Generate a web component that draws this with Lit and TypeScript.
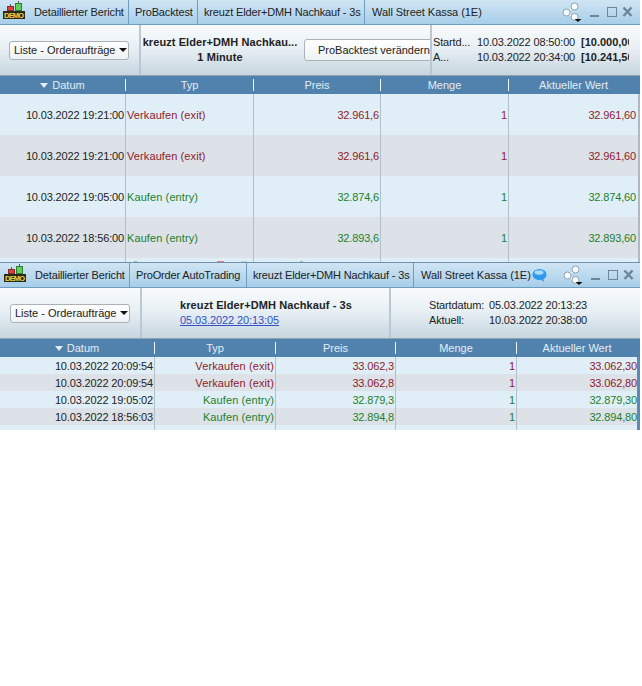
import { LitElement, html, css, svg } from "lit";
import { customElement, property } from "lit/decorators.js";

const RED = "sell";
const GREEN = "buy";

const demoLogo = html`<svg class="logo" width="24" height="20" viewBox="0 0 24 20">
  <path d="M7.500 3v3M15.500 0v3" stroke="#556" fill="none"/>
  <rect x="4.500" y="5.500" width="6" height="4" fill="#e0403a" stroke="#8a2a2a"/>
  <rect x="12.500" y="2.500" width="6" height="7" fill="#5fd05a" stroke="#2e7d32"/>
  <rect x="0" y="10" width="22" height="8" fill="#2a2a1c"/>
  <text x="11" y="17" text-anchor="middle" font-family="Liberation Sans, sans-serif" font-size="7.500" font-weight="700" fill="#f2d23c" textLength="20">DEMO</text>
</svg>`;

const shareIcon = svg`<svg width="20" height="20" viewBox="0 0 20 20">
  <path d="M4.500 10.500 L12.500 4.500 M4.500 10.500 L12.500 15.500" stroke="#f4f8fb" stroke-width="1.500" fill="none"/>
  <circle cx="4.500" cy="10.500" r="3.500" fill="#fbfdfe" stroke="#8aa1b3"/>
  <circle cx="12.500" cy="4.500" r="3.500" fill="#fbfdfe" stroke="#8aa1b3"/>
  <circle cx="12.500" cy="15" r="3.500" fill="#fbfdfe" stroke="#8aa1b3"/>
  <path d="M12.500 17h7l-3.500 3z" fill="#111"/>
</svg>`;

const winIcons = html`<svg width="44" height="12" viewBox="0 0 44 12">
  <path d="M0 10h9" stroke="#6d8597" stroke-width="2"/>
  <rect x="17.500" y="1.500" width="9" height="9" fill="none" stroke="#6d8597"/>
  <path d="M33.500 1.500l8 8.500M41.500 1.500l-8 8.500" stroke="#6d8597" stroke-width="2.400" fill="none"/>
</svg>`;

const bubble = html`<svg class="bubble" width="15" height="13" viewBox="0 0 15 13">
  <ellipse cx="7.500" cy="5.500" rx="7" ry="5.500" fill="#2f9be8"/>
  <ellipse cx="7" cy="3.500" rx="4.500" ry="2.200" fill="#a8dcfa"/>
  <path d="M8 10l4 3-1-4z" fill="#2f9be8"/>
</svg>`;

interface Row {
  datum: string;
  typ: string;
  preis: string;
  menge: string;
  wert: string;
  kind: string;
}

// bits of the chart behind the window that show through at its lower edge
const peeks = [
  { x: 134, w: 3, c: "#8fc09a" },
  { x: 217, w: 7, c: "#e08088" },
  { x: 241, w: 6, c: "#c4ced0" },
  { x: 300, w: 3, c: "#8fc09a" },
];

@customElement("trade-window")
class TradeWindow extends LitElement {
  @property({ reflect: true }) variant = "";
  @property({ attribute: false }) tabs: string[] = [];
  @property({ attribute: false }) rows: Row[] = [];

  static styles = css`
    :host {
      display: block;
      font-family: "Liberation Sans", Arial, sans-serif;
      font-size: 11px;
      color: #222;
      overflow: hidden;
      box-sizing: border-box;
      width: 640px;
    }
    :host([variant="backtest"]) {
      --cols: 126px 128px 127px 128px 129px;
      --tabs: 129px 69px 167px 1fr;
      --tool: 141px 291px 1fr;
      --row-h: 41px;
      --tail: 4px;
      --tab-pad: 3px;
      --ctl-pad: 6px;
      --last-pad: 2px;
      --select-pad: 9px;
      --scroll: #aeb9c3;
      --scroll-w: 2px;
      height: 262px;
    }
    :host([variant="live"]) {
      --cols: 155px 121px 120px 121px 120px;
      --tabs: 130px 117px 167px 1fr;
      --tool: 142px 249px 1fr;
      --row-h: 17px;
      --tail: 5px;
      --tab-pad: 4px;
      --ctl-pad: 5px;
      --last-pad: 0px;
      --select-pad: 10px;
      --scroll: #5b8ab4;
      --scroll-w: 3px;
      height: 168px;
      border-top: 1px solid #6e8fb0;
    }
    .tabs {
      display: grid;
      grid-template-columns: var(--tabs);
      height: 24px;
      background: linear-gradient(#d0e5f4, #a7cee9);
      border-bottom: 1px solid #6e9dc0;
      align-items: stretch;
    }
    .tab {
      display: flex;
      align-items: center;
      padding-left: 6px;
      border-right: 1px solid #6e9dc0;
      white-space: nowrap;
      overflow: hidden;
      gap: 1px;
      letter-spacing: -0.15px;
    }
    .tab.first {
      padding-left: var(--tab-pad);
      gap: 7px;
    }
    .tab.last {
      border-right: 0;
      padding-left: 7px;
      letter-spacing: -0.05px;
    }
    .logo {
      flex: none;
      margin-top: -2px;
    }
    .controls {
      margin-left: auto;
      padding-right: var(--ctl-pad);
      display: flex;
      align-items: center;
      gap: 8px;
    }
    .tool {
      display: grid;
      grid-template-columns: var(--tool);
      height: 50px;
      background: linear-gradient(#f8fbfd, #e8f0f5 45%, #c7d6df);
      border-bottom: 1px solid #8fa3b1;
    }
    .pane {
      border-right: 2px solid #b9c8d2;
      display: flex;
      align-items: center;
      overflow: hidden;
      white-space: nowrap;
    }
    .pane.end {
      border-right: 0;
    }
    .pane.select-pane {
      padding-left: var(--select-pad);
    }
    .select {
      box-sizing: border-box;
      width: 120px;
      height: 19px;
      display: flex;
      align-items: center;
      padding-left: 4px;
      gap: 3px;
      border: 1px solid #aab2b8;
      border-radius: 3px;
      background: linear-gradient(#ffffff, #eef2f4);
    }
    .caret {
      width: 0;
      height: 0;
      border: 4px solid transparent;
      border-top: 4px solid #111;
      border-bottom: 0;
    }
    .stack {
      display: flex;
      flex-direction: column;
      align-items: center;
      line-height: 15px;
      font-weight: 700;
      letter-spacing: 0.08px;
      width: 156px;
      margin-left: 1px;
      flex: none;
    }
    .bt-button {
      box-sizing: border-box;
      flex: none;
      width: 140px;
      height: 22px;
      margin-left: 6px;
      padding-left: 13px;
      line-height: 20px;
      border: 1px solid #aab2b8;
      border-radius: 3px;
      background: linear-gradient(#ffffff, #eef2f4);
    }
    .live-name {
      padding-left: 38px;
      line-height: 15px;
    }
    .live-name b {
      display: block;
      letter-spacing: 0.1px;
    }
    .live-name a {
      color: #3550c4;
      text-decoration: underline;
      letter-spacing: -0.1px;
    }
    .info {
      display: grid;
      line-height: 15px;
      letter-spacing: -0.15px;
    }
    .info.bt {
      grid-template-columns: 44px 104px 100px;
      padding-left: 1px;
      width: 196px;
      overflow: hidden;
    }
    .info b {
      letter-spacing: 0;
    }
    .info.lv {
      grid-template-columns: 60px 110px;
      padding-left: 38px;
    }
    .grid {
      display: grid;
      grid-template-columns: var(--cols);
    }
    .head {
      height: 18px;
      background: #5182ae;
      color: #e4edf4;
      align-items: center;
    }
    .head > div {
      text-align: center;
      border-right: 1px solid #f2f6f9;
      height: 12px;
      line-height: 12px;
      box-sizing: border-box;
    }
    .head > div:last-child {
      border-right: 0;
    }
    .sort {
      display: inline-block;
      width: 0;
      height: 0;
      margin-right: 4px;
      vertical-align: 1px;
      border: 4px solid transparent;
      border-top: 5px solid #e4edf4;
      border-bottom: 0;
    }
    .body {
      border-right: var(--scroll-w) solid var(--scroll);
    }
    .row > div {
      height: var(--row-h);
      line-height: var(--row-h);
      padding: 1px 1px 0 1px;
      text-align: right;
      border-right: 1px solid #b3c0ca;
      box-sizing: border-box;
      white-space: nowrap;
      letter-spacing: -0.15px;
    }
    .row > div.typ {
      letter-spacing: 0.1px;
    }
    .row > div:last-child {
      border-right: 0;
      padding-right: var(--last-pad);
    }
    .row.even > div {
      background: #e0eff7;
    }
    .row.odd > div {
      background: #dce2e8;
    }
    .sell {
      color: #8e1b2a;
    }
    .buy {
      color: #1d7f2c;
    }
    :host([variant="backtest"]) .row .typ {
      text-align: left;
    }
    .tail {
      position: relative;
    }
    .tail > div {
      height: var(--tail);
      background: #e0eff7;
      border-right: 1px solid #b3c0ca;
      box-sizing: border-box;
    }
    .tail > div:last-of-type {
      border-right: 0;
    }
    .peek {
      position: absolute;
      bottom: 0;
      height: 1px;
    }
  `;

  _middle() {
    if (this.variant === "live") {
      return html`<div class="live-name"><b>kreuzt Elder+DMH Nachkauf - 3s</b><a>05.03.2022 20:13:05</a></div>`;
    }
    return html`<div class="stack"><span>kreuzt Elder+DMH Nachkau...</span><span>1 Minute</span></div>
      <div class="bt-button">ProBacktest verändern</div>`;
  }

  _right() {
    if (this.variant === "live") {
      return html`<div class="info lv">
        <span>Startdatum:</span><span>05.03.2022 20:13:23</span>
        <span>Aktuell:</span><span>10.03.2022 20:38:00</span>
      </div>`;
    }
    return html`<div class="info bt">
      <span>Startd...</span><span>10.03.2022 08:50:00</span><b>[10.000,00</b>
      <span>A...</span><span>10.03.2022 20:34:00</span><b>[10.241,50</b>
    </div>`;
  }

  render() {
    const last = this.tabs.length - 1;
    return html`
      <div class="tabs">
        ${this.tabs.map(
          (t, i) => html`<div class="tab ${i === 0 ? "first" : ""} ${i === last ? "last" : ""}">
            ${i === 0 ? demoLogo : ""}<span>${t}</span>
            ${i === last
              ? html`${this.variant === "live" ? bubble : ""}
                  <div class="controls">${shareIcon}${winIcons}</div>`
              : ""}
          </div>`
        )}
      </div>
      <div class="tool">
        <div class="pane select-pane">
          <div class="select">Liste - Orderaufträge<span class="caret"></span></div>
        </div>
        <div class="pane">${this._middle()}</div>
        <div class="pane end">${this._right()}</div>
      </div>
      <div class="grid head">
        <div><span class="sort"></span>Datum</div>
        <div>Typ</div>
        <div>Preis</div>
        <div>Menge</div>
        <div>Aktueller Wert</div>
      </div>
      <div class="body">
        ${this.rows.map(
          (r, i) => html`<div class="grid row ${i % 2 ? "odd" : "even"}">
            <div>${r.datum}</div>
            <div class="typ ${r.kind}">${r.typ}</div>
            <div class=${r.kind}>${r.preis}</div>
            <div class=${r.kind}>${r.menge}</div>
            <div class=${r.kind}>${r.wert}</div>
          </div>`
        )}
        <div class="grid tail">
          <div></div><div></div><div></div><div></div><div></div>
          ${this.variant === "backtest"
            ? peeks.map(
                (p) => html`<span class="peek" style="left:${p.x}px;width:${p.w}px;background:${p.c}"></span>`
              )
            : ""}
        </div>
      </div>
    `;
  }
}

const backtestRows: Row[] = [
  { datum: "10.03.2022 19:21:00", typ: "Verkaufen (exit)", preis: "32.961,6", menge: "1", wert: "32.961,60", kind: RED },
  { datum: "10.03.2022 19:21:00", typ: "Verkaufen (exit)", preis: "32.961,6", menge: "1", wert: "32.961,60", kind: RED },
  { datum: "10.03.2022 19:05:00", typ: "Kaufen (entry)", preis: "32.874,6", menge: "1", wert: "32.874,60", kind: GREEN },
  { datum: "10.03.2022 18:56:00", typ: "Kaufen (entry)", preis: "32.893,6", menge: "1", wert: "32.893,60", kind: GREEN },
];

const liveRows: Row[] = [
  { datum: "10.03.2022 20:09:54", typ: "Verkaufen (exit)", preis: "33.062,3", menge: "1", wert: "33.062,30", kind: RED },
  { datum: "10.03.2022 20:09:54", typ: "Verkaufen (exit)", preis: "33.062,8", menge: "1", wert: "33.062,80", kind: RED },
  { datum: "10.03.2022 19:05:02", typ: "Kaufen (entry)", preis: "32.879,3", menge: "1", wert: "32.879,30", kind: GREEN },
  { datum: "10.03.2022 18:56:03", typ: "Kaufen (entry)", preis: "32.894,8", menge: "1", wert: "32.894,80", kind: GREEN },
];

@customElement("app-root")
export class AppRoot extends LitElement {
  static styles = css`
    :host {
      display: block;
      width: 642px;
      height: 686px;
      background: #fff;
    }
  `;

  render() {
    return html`
      <trade-window
        variant="backtest"
        .tabs=${["Detaillierter Bericht", "ProBacktest", "kreuzt Elder+DMH Nachkauf - 3s", "Wall Street Kassa (1E)"]}
        .rows=${backtestRows}
      ></trade-window>
      <trade-window
        variant="live"
        .tabs=${["Detaillierter Bericht", "ProOrder AutoTrading", "kreuzt Elder+DMH Nachkauf - 3s", "Wall Street Kassa (1E)"]}
        .rows=${liveRows}
      ></trade-window>
    `;
  }
}
